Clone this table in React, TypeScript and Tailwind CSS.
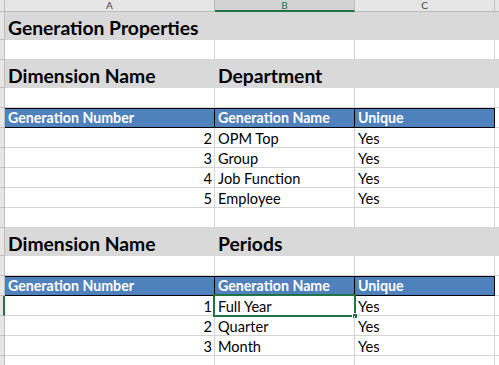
import React from "react";

const GRID = "border-[#d4d4d4]";
const font = { fontFamily: "Lato, 'Liberation Sans', sans-serif" };

function RowHead({ h, selected }: { h: string; selected?: boolean }) {
  return (
    <div
      className={`${h} w-[5px] shrink-0 bg-[#e6e6e6] border-b border-r border-[#bdbdbd] box-border ${
        selected ? "border-r-2 border-r-[#217346] bg-[#d2d2d2]" : ""
      }`}
    />
  );
}

function BlankRow() {
  return (
    <div className="flex h-[20px]">
      <RowHead h="h-[20px]" />
      <div className={`w-[210px] shrink-0 border-r border-b ${GRID}`} />
      <div className={`w-[140px] shrink-0 border-r border-b ${GRID}`} />
      <div className={`w-[140px] shrink-0 border-r border-b ${GRID}`} />
      <div className={`flex-1 border-b ${GRID}`} />
    </div>
  );
}

function GrayRow({ a, b }: { a: string; b?: string }) {
  return (
    <div className="flex h-[28px]">
      <RowHead h="h-[28px]" />
      <div className="flex-1 flex bg-[#d9d9d9] text-[19.3px] font-bold text-black">
        <div className="w-[210px] shrink-0 flex items-end pl-[3px] pb-[0px] whitespace-nowrap leading-[24px]">
          {a}
        </div>
        <div className="flex items-end pl-[3px] pb-[0px] whitespace-nowrap leading-[24px]">{b}</div>
      </div>
    </div>
  );
}

function BlueRow() {
  const cell = "shrink-0 flex items-end pl-[3px] pb-0 leading-[18px] whitespace-nowrap";
  return (
    <div className="flex h-[20px]">
      <RowHead h="h-[20px]" />
      <div className="flex bg-[#4f81bd] text-white font-bold text-[14.2px] border-y border-black box-border">
        <div className={`${cell} w-[210px] border-r border-black`}>Generation Number</div>
        <div className={`${cell} w-[140px] border-r border-black`}>Generation Name</div>
        <div className={`${cell} w-[140px] border-r border-black`}>Unique</div>
      </div>
      <div className={`flex-1 border-b ${GRID}`} />
    </div>
  );
}

function DataRow({ n, name, selected }: { n: number; name: string; selected?: boolean }) {
  const cell = "shrink-0 flex items-end pb-0 leading-[18px] whitespace-nowrap border-r border-b " + GRID;
  return (
    <div className="flex h-[20px] text-[14.6px] text-black">
      <RowHead h="h-[20px]" selected={selected} />
      <div className={`${cell} w-[210px] justify-end pr-[2px]`}>
        <span className="relative top-[1px]">{n}</span>
      </div>
      <div className={`${cell} w-[140px] pl-[3px] relative`}>
        <span className="relative top-[1px]">{name}</span>
        {selected && (
          <>
            <div className="absolute left-[-2px] top-[-2px] w-[143px] h-[23px] border-2 border-[#217346]" />
            <div className="absolute left-[137px] top-[17px] w-[6px] h-[6px] bg-[#217346] border border-white" />
          </>
        )}
      </div>
      <div className={`${cell} w-[140px] pl-[3px]`}>
        <span className="relative top-[1px]">Yes</span>
      </div>
      <div className={`flex-1 border-b ${GRID}`} />
    </div>
  );
}

function ColHeader() {
  const c = "h-[12px] shrink-0 flex items-start justify-center text-[10px] leading-[10px] overflow-hidden border-b box-border";
  return (
    <div className="flex h-[12px]">
      <div className="w-[5px] h-[12px] shrink-0 bg-[#e6e6e6] border-r border-b border-[#bdbdbd]" />
      <div className={`${c} w-[210px] bg-[#e6e6e6] text-[#444] border-r border-[#bdbdbd]`}>
        <span>A</span>
      </div>
      <div className={`${c} w-[140px] bg-[#d2d2d2] text-[#217346] border-b-2 border-b-[#217346] border-r border-r-[#bdbdbd]`}>
        <span>B</span>
      </div>
      <div className={`${c} w-[140px] bg-[#e6e6e6] text-[#444] border-r border-[#bdbdbd]`}>
        <span>C</span>
      </div>
      <div className={`${c} flex-1 bg-[#e6e6e6] border-[#bdbdbd]`} />
    </div>
  );
}

export default function App() {
  return (
    <div className="w-[499px] h-[365px] overflow-hidden bg-white" style={font}>
      <ColHeader />
      <GrayRow a="Generation Properties" />
      <BlankRow />
      <GrayRow a="Dimension Name" b="Department" />
      <BlankRow />
      <BlueRow />
      <DataRow n={2} name="OPM Top" />
      <DataRow n={3} name="Group" />
      <DataRow n={4} name="Job Function" />
      <DataRow n={5} name="Employee" />
      <BlankRow />
      <GrayRow a="Dimension Name" b="Periods" />
      <BlankRow />
      <BlueRow />
      <DataRow n={1} name="Full Year" selected />
      <DataRow n={2} name="Quarter" />
      <DataRow n={3} name="Month" />
      <BlankRow />
    </div>
  );
}
